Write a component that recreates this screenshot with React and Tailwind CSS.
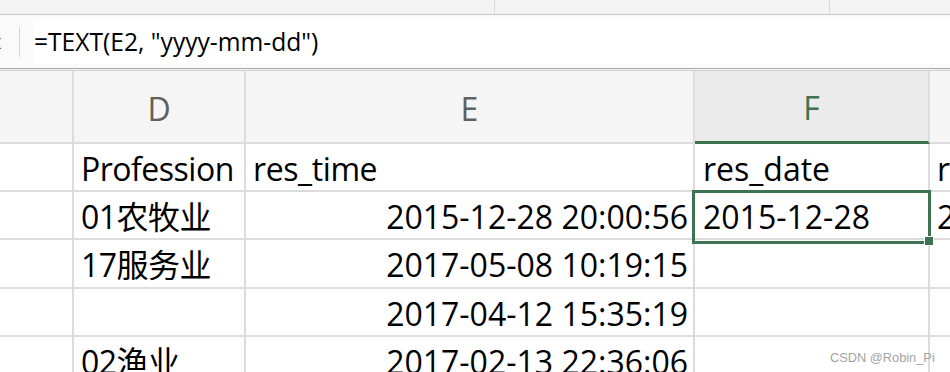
import React from "react";

const rows = [
  { d: "Profession", e: "res_time", eLeft: true, f: "res_date", g: "re" },
  { d: "01农牧业", e: "2015-12-28 20:00:56", f: "2015-12-28", g: "2" },
  { d: "17服务业", e: "2017-05-08 10:19:15", f: "", g: "" },
  { d: "", e: "2017-04-12 15:35:19", f: "", g: "" },
  { d: "02渔业", e: "2017-02-13 22:36:06", f: "", g: "" },
];

const heights = ["h-[48px]", "h-[48px]", "h-[49px]", "h-[48px]", "h-[48px]"];

const App = () => {
  return (
    <div className="relative w-[950px] h-[372px] overflow-hidden bg-white font-['Open_Sans','Noto_Sans_CJK_SC',sans-serif] text-black">
      {/* top toolbar strip */}
      <div className="flex h-[15px] bg-[#f3f3f3] border-b border-[#c9c9c9]">
        <div className="w-[495px] border-r border-[#d9d9d9]" />
        <div className="w-[335px] border-r border-[#d9d9d9]" />
      </div>

      {/* formula bar */}
      <div className="flex items-center h-[53px] bg-[#fafafa]">
        <div className="w-[19px] h-full overflow-hidden flex items-center">
          <span className="-ml-[9px] text-[20px] text-[#444]">x</span>
        </div>
        <div className="w-px h-[30px] bg-[#d4d4d4]" />
        <div className="ml-[13px] flex-1 h-[45px] bg-white flex items-center pl-[1px] pt-[1px] text-[24.6px]">
          =TEXT(E2, "yyyy-mm-dd")
        </div>
      </div>
      <div className="h-px bg-[#a9a9a9]" />
      <div className="h-px bg-[#f4f4f4]" />
      <div className="h-px bg-[#cfcfcf]" />

      {/* column headers */}
      <div className="flex h-[73px] bg-[#f5f5f5] text-[32px] text-[#606060]">
        <div className="w-[74px] border-r-2 border-b-2 border-[#dcdcdc]" />
        <div className="w-[172px] border-r-2 border-b-2 border-[#dcdcdc] flex items-center justify-center pt-[4px]">D</div>
        <div className="w-[449px] border-r-2 border-b-2 border-[#dcdcdc] flex items-center justify-center pt-[4px]">E</div>
        <div className="w-[235px] bg-[#ebebeb] border-r-2 border-[#dcdcdc] border-b-[3px] border-b-[#3d7350] flex items-center justify-center pt-[4px] text-[#3d7350]">F</div>
        <div className="flex-1 border-b-2 border-[#dcdcdc]" />
      </div>

      {/* data rows */}
      {rows.map((r, i) => (
        <div key={i} className={`flex ${heights[i]} text-[32px] leading-[46px] whitespace-nowrap`}>
          <div className="w-[74px] border-r-2 border-b-2 border-[#dcdcdc]" />
          <div className="w-[172px] border-r-2 border-b-2 border-[#dcdcdc] pt-[2px] pl-[7px] tracking-[-0.5px] overflow-hidden">{r.d}</div>
          <div className={`w-[449px] border-r-2 border-b-2 border-[#dcdcdc] pt-[2px] overflow-hidden ${r.eLeft ? "pl-[7px] tracking-[-0.4px]" : "text-right pr-[5px]"}`}>{r.e}</div>
          <div className="w-[235px] border-r-2 border-b-2 border-[#dcdcdc] pt-[2px] pl-[8px] overflow-hidden">{r.f}</div>
          <div className="flex-1 border-b-2 border-[#dcdcdc] pt-[2px] pl-[7px] overflow-hidden">{r.g}</div>
        </div>
      ))}

      {/* selected cell F2 */}
      <div className="absolute left-[692px] top-[190px] w-[239px] h-[54px] border-[3px] border-[#3d7350]" />
      <div className="absolute left-[924px] top-[236px] w-[10px] h-[10px] bg-[#3d7350] border border-white" />

      {/* watermark */}
      <div className="absolute left-[830px] top-[348px] text-[12.8px] text-[#a3a3a3] font-['Liberation_Sans',sans-serif]">
        CSDN @Robin_Pi
      </div>
    </div>
  );
};

export default App;
